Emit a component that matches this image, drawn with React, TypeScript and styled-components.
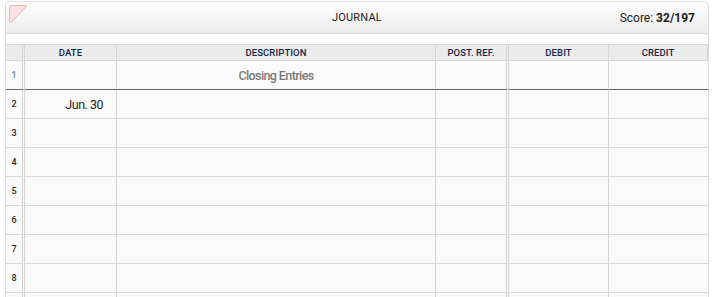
import React from 'react';
import styled, { createGlobalStyle } from 'styled-components';

const GlobalStyle = createGlobalStyle`
  html, body {
    margin: 0;
    padding: 0;
    background: #ffffff;
    font-family: Roboto, "Liberation Sans", sans-serif;
  }
`;

const Panel = styled.div`
  width: 702px;
  margin: 1px 0 0 5px;
  border-left: 1px solid #d9d9d9;
  border-right: 1px solid #d9d9d9;
  border-top: 1px solid #e2e2e2;
  border-radius: 4px 6px 0 0;
  background: #ffffff;
`;

const TitleBar = styled.div`
  position: relative;
  height: 31px;
  display: flex;
  align-items: center;
  justify-content: center;
  background: linear-gradient(#fefefe, #ececec);
  border-bottom: 1px solid #d6d6d6;
  border-radius: 4px 6px 0 0;
`;

const Corner = styled.svg`
  position: absolute;
  left: 2px;
  top: 2px;
`;

const Title = styled.span`
  font-size: 11px;
  letter-spacing: 0.2px;
  color: #1c1c1c;
`;

const Score = styled.span`
  position: absolute;
  right: 13px;
  top: 9px;
  font-size: 12px;
  color: #1c1c1c;

  b {
    font-weight: 700;
  }
`;

const Spacer = styled.div`
  height: 10px;
  border-bottom: 1px solid #d6d6d6;
`;

const Grid = styled.div`
  display: grid;
  grid-template-columns: 19px 92px 319px 73px 100px 99px;
  background: #fafafa;
`;

const HeadCell = styled.div<{ $double?: boolean }>`
  height: 15px;
  display: flex;
  align-items: center;
  justify-content: center;
  background: #ebebeb;
  border-bottom: 1px solid #d6d6d6;
  border-right: ${(p) => (p.$double ? '3px double #d3d3d3' : '1px solid #d6d6d6')};
  font-size: 9.5px;
  font-weight: 500;
  color: #16264a;
  letter-spacing: 0.1px;
  &:last-child {
    border-right: none;
  }
`;

const Cell = styled.div<{ $double?: boolean; $last?: boolean; $strong?: boolean; $align?: string }>`
  height: 28px;
  display: flex;
  align-items: center;
  justify-content: ${(p) => p.$align || 'center'};
  border-bottom: 1px solid ${(p) => (p.$strong ? '#666666' : '#d9d9d9')};
  border-right: ${(p) => (p.$last ? 'none' : p.$double ? '3px double #d3d3d3' : '1px solid #d6d6d6')};
`;

const RowNum = styled(Cell)<{ $blue?: boolean }>`
  font-size: 9px;
  font-weight: 500;
  color: ${(p) => (p.$blue ? '#6d7fab' : '#2a2a2a')};
`;

const Desc = styled.span`
  font-size: 12.5px;
  letter-spacing: -0.6px;
  font-weight: 500;
  color: #7a7a7a;
`;

const DateText = styled.span`
  font-size: 12.5px;
  letter-spacing: -0.5px;
  color: #1e1e1e;
  padding-right: 13px;
`;

const headers = ['DATE', 'DESCRIPTION', 'POST. REF.', 'DEBIT', 'CREDIT'];

export default function App() {
  const rows = [1, 2, 3, 4, 5, 6, 7, 8, 9];
  return (
    <>
      <GlobalStyle />
      <Panel>
        <TitleBar>
          <Corner width="20" height="20" viewBox="0 0 20 20">
            <path
              d="M1.5 4 Q1.5 1.5 4 1.5 L18 1.5 Q18.8 1.6 18.3 2.4 L3.2 18.3 Q2.2 19 1.5 17.5 Z"
              fill="#fde0e0"
              stroke="#e5b3b3"
              strokeWidth="1"
            />
          </Corner>
          <Title>JOURNAL</Title>
          <Score>
            Score: <b>32/197</b>
          </Score>
        </TitleBar>
        <Spacer />
        <Grid>
          <HeadCell $double />
          {headers.map((h, i) => (
            <HeadCell key={h} $double={i === 2}>
              {h}
            </HeadCell>
          ))}
          {rows.map((r) => (
            <React.Fragment key={r}>
              <RowNum $double $strong={r === 1} $blue={r === 1}>
                {r < 9 ? r : ''}
              </RowNum>
              <Cell $strong={r === 1} $align="flex-end">
                {r === 2 && <DateText>Jun. 30</DateText>}
              </Cell>
              <Cell $strong={r === 1}>{r === 1 && <Desc>Closing Entries</Desc>}</Cell>
              <Cell $strong={r === 1} $double />
              <Cell $strong={r === 1} />
              <Cell $strong={r === 1} $last />
            </React.Fragment>
          ))}
        </Grid>
      </Panel>
    </>
  );
}
